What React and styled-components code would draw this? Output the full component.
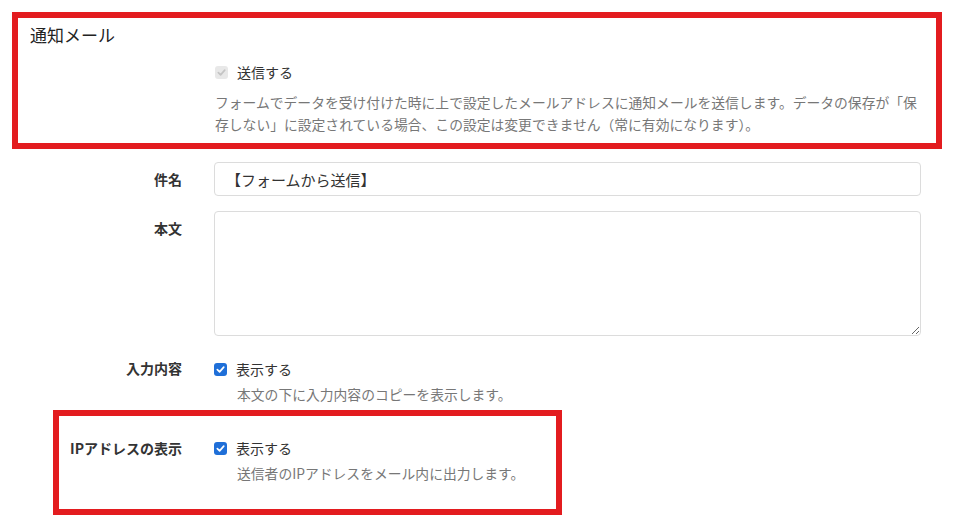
import React from "react";
import styled, { createGlobalStyle } from "styled-components";

const GlobalStyle = createGlobalStyle`
  html, body {
    margin: 0;
    padding: 0;
    background: #fff;
  }
  body {
    font-family: "Noto Sans CJK JP", "Noto Sans", sans-serif;
    color: #333;
  }
`;

const Page = styled.div`
  width: 960px;
  height: 516px;
  overflow: hidden;
  padding-top: 12px;
  box-sizing: border-box;
`;

const Highlight = styled.section`
  border: 6px solid #e31c1f;
  box-sizing: border-box;
  margin: ${({ $top }) => $top || 0}px 0 0 ${({ $left }) => $left}px;
  width: ${({ $width }) => $width}px;
  padding: ${({ $pad }) => $pad};
`;

const Title = styled.h2`
  margin: 0;
  padding-left: 12px;
  font-size: 17px;
  line-height: 24px;
  font-weight: 400;
  color: #222;
`;

const Row = styled.div`
  display: grid;
  grid-template-columns: ${({ $labelWidth }) => $labelWidth}px 1fr;
  column-gap: 32px;
  margin-top: ${({ $top }) => $top || 0}px;
  padding-right: ${({ $right }) => $right || 0}px;
`;

const Label = styled.div`
  text-align: right;
  font-size: 14px;
  font-weight: 700;
  line-height: 20px;
  padding-top: ${({ $top }) => $top || 0}px;
  color: #333;
  white-space: nowrap;
`;

const Control = styled.div`
  display: flex;
  flex-direction: column;
  min-width: 0;
`;

const TextInput = styled.input`
  box-sizing: border-box;
  width: 100%;
  height: 34px;
  padding: 0 11px;
  border: 1px solid #dcdcdc;
  border-radius: 4px;
  font-family: inherit;
  font-size: 15px;
  color: #333;
  outline: none;
`;

const TextArea = styled.textarea`
  box-sizing: border-box;
  display: block;
  width: 100%;
  height: 125px;
  margin: 0;
  padding: 8px 11px;
  border: 1px solid #dcdcdc;
  border-radius: 4px;
  font-family: inherit;
  font-size: 15px;
  color: #333;
  outline: none;
  resize: vertical;
`;

const CheckLine = styled.label`
  display: flex;
  align-items: center;
  gap: 9px;
  font-size: 14px;
  line-height: 22px;
  color: #333;
  padding-left: ${({ $indent }) => $indent || 0}px;
`;

const Box = styled.span`
  display: inline-flex;
  align-items: center;
  justify-content: center;
  width: 13px;
  height: 13px;
  border-radius: 3px;
  background: ${({ $disabled }) => ($disabled ? "#e8e8e8" : "#1f6fd8")};
`;

const Help = styled.p`
  margin: ${({ $top }) => $top || 0}px 0 0;
  padding-left: ${({ $indent }) => $indent || 0}px;
  font-size: 13.8px;
  line-height: 22px;
  color: #777;
`;

function Checkbox({ disabled }) {
  return (
    <Box $disabled={disabled}>
      <svg width="9" height="9" viewBox="0 0 10 10">
        <path
          d="M1.5 5.2 L4 7.6 L8.6 2.4"
          fill="none"
          stroke={disabled ? "#c4c4c4" : "#fff"}
          strokeWidth="1.9"
          strokeLinecap="round"
          strokeLinejoin="round"
        />
      </svg>
    </Box>
  );
}

export default function App() {
  return (
    <>
      <GlobalStyle />
      <Page>
        <Highlight $left={12} $width={930} $pad="5px 0 8px">
          <Title>通知メール</Title>
          <Row $labelWidth={164} $top={14} $right={15}>
            <div />
            <Control>
              <CheckLine $indent={1}>
                <Checkbox disabled />
                送信する
              </CheckLine>
              <Help $top={8} $indent={1}>
                フォームでデータを受け付けた時に上で設定したメールアドレスに通知メールを送信します。データの保存が「保存しない」に設定されている場合、この設定は変更できません（常に有効になります）。
              </Help>
            </Control>
          </Row>
        </Highlight>

        <Row $labelWidth={182} $top={13} $right={39}>
          <Label $top={7}>件名</Label>
          <Control>
            <TextInput defaultValue="【フォームから送信】" />
          </Control>
        </Row>

        <Row $labelWidth={182} $top={15} $right={39}>
          <Label $top={7}>本文</Label>
          <Control>
            <TextArea />
          </Control>
        </Row>

        <Row $labelWidth={182} $top={22} $right={39}>
          <Label>入力内容</Label>
          <Control>
            <CheckLine>
              <Checkbox />
              表示する
            </CheckLine>
            <Help $top={3} $indent={23}>
              本文の下に入力内容のコピーを表示します。
            </Help>
          </Control>
        </Row>

        <Highlight $top={5} $left={53} $width={509} $pad="21px 0 25px">
          <Row $labelWidth={123}>
            <Label $top={1}>IPアドレスの表示</Label>
            <Control>
              <CheckLine>
                <Checkbox />
                表示する
              </CheckLine>
              <Help $top={3} $indent={23}>
                送信者のIPアドレスをメール内に出力します。
              </Help>
            </Control>
          </Row>
        </Highlight>
      </Page>
    </>
  );
}
